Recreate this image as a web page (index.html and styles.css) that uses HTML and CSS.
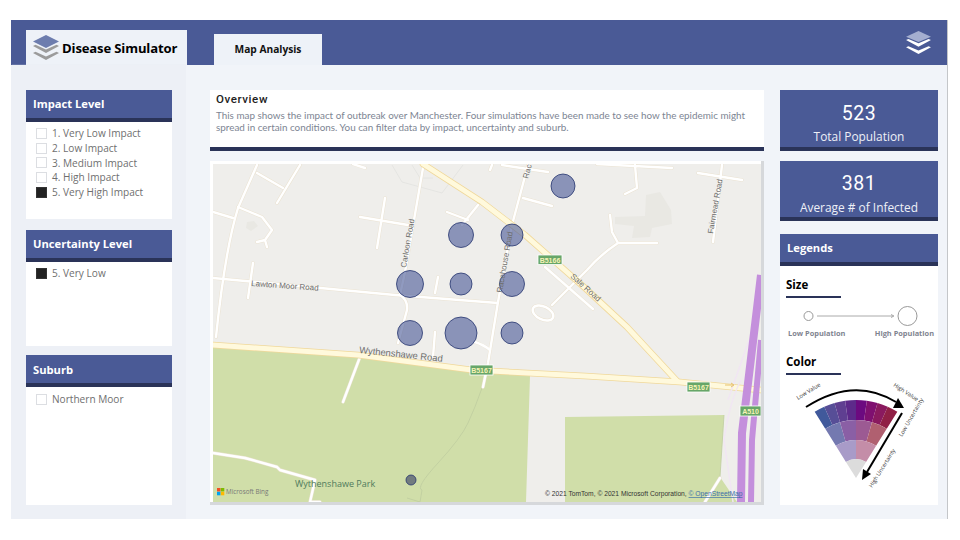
FILE: index.html
```html
<!DOCTYPE html>
<html lang="en">
<head>
    <meta charset="UTF-8">
    <title>Disease Simulator</title>
    <link rel="stylesheet" href="styles.css">
</head>
<body>
    <div class="report">
        <header class="topbar">
            <div class="logo-tab">
                <svg class="logo-icon" viewBox="0 0 26 25">
                    <path class="logo-low" d="M0 11L2.5 9.8L13 14.6L23.5 9.8L26 11L13 18Z"/>
                    <path class="logo-low" d="M0 18L2.5 16.8L13 21.6L23.5 16.8L26 18L13 25Z"/>
                    <path class="logo-top" d="M13 0L26 6.5L13 13L0 6.5Z"/>
                </svg>
                <span>Disease Simulator</span>
            </div>
            <div class="map-tab">Map Analysis</div>
            <svg class="menu-icon" viewBox="0 0 26 24">
                <path class="menu-top" d="M13 0L26 6L13 11.5L0 6Z"/>
                <path class="menu-low" d="M0 9.5L2.5 8.4L13 12.8L23.5 8.4L26 9.5L13 16.5Z"/>
                <path class="menu-low" d="M0 17L2.5 15.9L13 20.3L23.5 15.9L26 17L13 24Z"/>
            </svg>
        </header>

        <div class="content">
            <aside class="sidebar">
                <section class="panel panel-impact">
                    <h2 class="panel-title">Impact Level</h2>
                    <ul class="slicer">
                        <li><i class="check"></i>1. Very Low Impact</li>
                        <li><i class="check"></i>2. Low Impact</li>
                        <li><i class="check"></i>3. Medium Impact</li>
                        <li><i class="check"></i>4. High Impact</li>
                        <li><i class="check on"></i>5. Very High Impact</li>
                    </ul>
                </section>
                <section class="panel panel-uncertainty">
                    <h2 class="panel-title">Uncertainty Level</h2>
                    <ul class="slicer">
                        <li><i class="check on"></i>5. Very Low</li>
                    </ul>
                </section>
                <section class="panel panel-suburb">
                    <h2 class="panel-title">Suburb</h2>
                    <ul class="slicer">
                        <li><i class="check"></i>Northern Moor</li>
                    </ul>
                </section>
            </aside>

            <main class="main">
                <div class="center">
                    <section class="overview">
                        <h1>Overview</h1>
                        <p>This map shows the impact of outbreak over Manchester. Four simulations have been made to see how the epidemic might spread in certain conditions. You can filter data by impact, uncertainty and suburb.</p>
                    </section>
                    <section class="map-card">
                        <svg class="map" viewBox="213 164 548 338">
                            <defs>
                                <g id="minor">
                                    <path d="M257 165L238 208Q225 250 216 337"/>
                                    <path d="M257 173L283 188M300 165L277 203M213 212L233 218"/>
                                    <path d="M238 207L262 217L272 230L265 240L257 242M265 240L267 247"/>
                                    <path d="M213 278L395 295L498 303M253 263L248 298"/>
                                    <path d="M423 168L405 272L400 295Q408 300 407 310L398 343"/>
                                    <path d="M385 198L377 248M360 217L408 225"/>
                                    <path d="M447 212L468 220M478 205L462 225"/>
                                    <path d="M528 165L512 225L498 302L488 363L483 387"/>
                                    <path d="M523 198L552 206M438 277L435 293M435 332L433 357"/>
                                    <path d="M475 342Q484 345 490 350M360 357L343 402"/>
                                    <path d="M213 453L245 458L277 467L280 470L315 480L310 502H320"/>
                                    <path d="M353 164L365 168M492 165L490 170M502 165L548 172"/>
                                    <path d="M597 164L672 168M635 165L637 188L625 194"/>
                                    <path d="M698 173L742 180M722 165L713 242"/>
                                    <path d="M610 215L612 232L618 243H657M618 243Q600 255 587 270L570 287L552 305"/>
                                    <path d="M545 267L593 309M720 478L705 502"/>
                                    <ellipse cx="543" cy="313" rx="11" ry="6.5" transform="rotate(25 543 313)"/>
                                </g>
                                <g id="major">
                                    <path d="M213 345L358 355L472 370L585 376L680 382L761 390"/>
                                    <path d="M423 164L482 202L525 235L585 288L627 327L677 381"/>
                                </g>
                            </defs>
                            <rect class="ground" x="213" y="164" width="548" height="338"/>
                            <path class="park" d="M213 345L358 356L472 371L530 376L526 502H213Z"/>
                            <path class="park" d="M565 417L724 415L720 477L737 502H565Z"/>
                            <path class="building" d="M247 222L254 221L258 226L251 231L246 228Z"/>
                            <path class="building" d="M615 217L645 216L646 195L660 192L671 210L672 224L652 228L650 237L632 238L634 226L615 224Z"/>
                            <path class="outline" d="M392 165L402 182L442 193L463 165M412 165L420 178L433 178"/>
                            <path class="footpath" d="M482 388Q475 408 468 423T438 463T422 490L420 502L407 498"/>
                            <path class="footpath" d="M724 415L720 477"/>

                            <use href="#minor" class="minor-case"/>
                            <use href="#minor" class="minor-fill"/>
                            <use href="#major" class="major-case"/>
                            <use href="#major" class="major-fill"/>

                            <path class="slip" d="M741 380Q730 400 724 440L733 502M749 340Q735 380 728 400"/>
                            <path class="motorway" d="M761 275L749 375L742 433L741 502"/>
                            <path class="motorway thin" d="M761 340L756 395L752 440L751 502"/>
                            <path class="arrow-mark" d="M725 385H733M731 383L734 385L731 387"/>

                            <g class="bubbles">
                                <circle cx="563" cy="186" r="12"/>
                                <circle cx="461" cy="235" r="12.5"/>
                                <circle cx="512" cy="235" r="11"/>
                                <circle cx="410" cy="284" r="13.5"/>
                                <circle cx="461" cy="284" r="11"/>
                                <circle cx="512" cy="284" r="12.5"/>
                                <circle cx="410" cy="333" r="12.5"/>
                                <circle cx="461" cy="333" r="16"/>
                                <circle cx="512" cy="333" r="11"/>
                                <circle class="dark" cx="411" cy="480" r="5"/>
                            </g>

                            <g class="labels">
                                <text transform="translate(251 286) rotate(4)">Lawton Moor Road</text>
                                <text transform="translate(406 268) rotate(-80)">Carloon Road</text>
                                <text transform="translate(502 293) rotate(-80)">Racehouse Road</text>
                                <text transform="translate(528 179) rotate(-75)">Rac</text>
                                <text transform="translate(570 277) rotate(42)">Sale Road</text>
                                <text transform="translate(713 234) rotate(-80)">Fairmead Road</text>
                                <text class="wide" transform="translate(359 353) rotate(6)">Wythenshawe Road</text>
                            </g>
                            <text class="park-label" x="295" y="487">Wythenshawe Park</text>

                            <g class="shield">
                                <rect x="538" y="255" width="24" height="9.5"/><text x="550" y="262.5">B5166</text>
                                <rect x="470" y="365" width="23" height="10"/><text x="481.5" y="373">B5167</text>
                                <rect x="687" y="382" width="23" height="10"/><text x="698.5" y="390">B5167</text>
                                <rect x="740" y="406" width="21" height="10"/><text x="750.5" y="414">A510</text>
                            </g>

                            <rect class="ms-r" x="217" y="488" width="3.5" height="3.5"/>
                            <rect class="ms-g" x="220.8" y="488" width="3.5" height="3.5"/>
                            <rect class="ms-b" x="217" y="491.8" width="3.5" height="3.5"/>
                            <rect class="ms-y" x="220.8" y="491.8" width="3.5" height="3.5"/>
                            <text class="bing" x="226" y="494.3">Microsoft Bing</text>
                            <text class="attribution" x="545" y="496">© 2021 TomTom, © 2021 Microsoft Corporation, <tspan class="osm">© OpenStreetMap</tspan></text>
                        </svg>
                    </section>
                </div>

                <div class="right">
                    <section class="kpi kpi-total">
                        <div class="kpi-value">523</div>
                        <div class="kpi-label">Total Population</div>
                    </section>
                    <section class="kpi kpi-avg">
                        <div class="kpi-value">381</div>
                        <div class="kpi-label">Average # of Infected</div>
                    </section>
                    <section class="panel legends">
                        <h2 class="panel-title">Legends</h2>
                        <h3 class="legend-head">Size</h3>
                        <svg class="size-scale" viewBox="0 0 158 24">
                            <circle cx="28.5" cy="12" r="4.5"/>
                            <circle cx="127.5" cy="12" r="9.5"/>
                            <path d="M37 12H113M111 10.5L114 12L111 13.5"/>
                        </svg>
                        <div class="size-labels">
                            <span>Low Population</span>
                            <span>High Population</span>
                        </div>
                        <h3 class="legend-head legend-color">Color</h3>
                        <svg class="wheel" viewBox="781 380 157 110">
                            <defs>
                                <path id="seg8" d="M-4.05 -57.86L-5.44 -77.81A78 78 0 0 1 5.44 -77.81L4.05 -57.86A58 58 0 0 0 -4.05 -57.86Z"/>
                                <path id="seg4" d="M-5.29 -37.63L-8.07 -57.44A58 58 0 0 1 8.07 -57.44L5.29 -37.63A38 38 0 0 0 -5.29 -37.63Z"/>
                                <path id="seg2" d="M-5.24 -18.26L-10.47 -36.53A38 38 0 0 1 10.47 -36.53L5.24 -18.26A19 19 0 0 0 -5.24 -18.26Z"/>
                            </defs>
                            <g transform="translate(857 478)">
                                <use href="#seg8" transform="rotate(-28)" fill="#40599b"/>
                                <use href="#seg8" transform="rotate(-20)" fill="#574e97"/>
                                <use href="#seg8" transform="rotate(-12)" fill="#5f3f91"/>
                                <use href="#seg8" transform="rotate(-4)" fill="#5d2a8a"/>
                                <use href="#seg8" transform="rotate(4)" fill="#6c0a80"/>
                                <use href="#seg8" transform="rotate(12)" fill="#7f1070"/>
                                <use href="#seg8" transform="rotate(20)" fill="#8a1a5f"/>
                                <use href="#seg8" transform="rotate(28)" fill="#902045"/>
                                <use href="#seg4" transform="rotate(-24)" fill="#7479b0"/>
                                <use href="#seg4" transform="rotate(-8)" fill="#8a5fa5"/>
                                <use href="#seg4" transform="rotate(8)" fill="#9c5a93"/>
                                <use href="#seg4" transform="rotate(24)" fill="#b06070"/>
                                <use href="#seg2" transform="rotate(-16)" fill="#a89bc8"/>
                                <use href="#seg2" transform="rotate(16)" fill="#c48da8"/>
                                <path d="M0 0L-10.07 -16.11A19 19 0 0 1 10.07 -16.11Z" fill="#dcdcdc"/>
                            </g>
                            <path class="wheel-arrow" d="M807 407Q855 376 897 402"/>
                            <path class="wheel-head" d="M905 408L894 408L899 398Z"/>
                            <path class="wheel-arrow" d="M903 413L868 472"/>
                            <path class="wheel-head" d="M863 480L864 469L872 474Z"/>
                            <g class="wheel-text">
                                <text transform="translate(799 400) rotate(-32)">Low Value</text>
                                <text transform="translate(894 386) rotate(33)">High Value</text>
                                <text transform="translate(903 437) rotate(-60)">Low Uncertainty</text>
                                <text transform="translate(873 488) rotate(-58)">High Uncertainty</text>
                            </g>
                        </svg>
                    </section>
                </div>
            </main>
        </div>
    </div>
</body>
</html>
```

FILE: styles.css
```css
body {
    margin: 0;
    background: #fff;
    font-family: "Open Sans", "Liberation Sans", sans-serif;
}
h1, h2, h3, p, ul {
    margin: 0;
    padding: 0;
}
svg {
    display: block;
}

.report {
    width: 936px;
    height: 499px;
    margin: 20px 0 0 11px;
    display: flex;
    flex-direction: column;
    box-shadow: 1px 0 0 #c4c6c9;
}

/* top bar */
.topbar {
    height: 45px;
    flex: none;
    display: flex;
    align-items: flex-end;
    background: #4a5a96;
}
.logo-tab {
    width: 161px;
    height: 35px;
    margin-left: 15px;
    padding-left: 7px;
    box-sizing: border-box;
    display: flex;
    align-items: center;
    gap: 3px;
    background: #eef2f8;
    color: #000;
    font-size: 13.1px;
    font-weight: 700;
    letter-spacing: -0.15px;
    white-space: nowrap;
}
.logo-icon {
    width: 26px;
    height: 25px;
    flex: none;
}
.logo-top {
    fill: #6d7dae;
}
.logo-low {
    fill: #9b9b9b;
}
.map-tab {
    width: 108px;
    height: 31px;
    margin-left: 27px;
    padding-bottom: 2px;
    box-sizing: border-box;
    display: flex;
    align-items: center;
    justify-content: center;
    background: #eef2f8;
    color: #111;
    font-size: 10.2px;
    font-weight: 700;
}
.menu-icon {
    width: 25px;
    height: 23px;
    margin: 0 16px 11px auto;
}
.menu-top {
    fill: #a4aed0;
}
.menu-low {
    fill: #fff;
}

/* page body */
.content {
    flex: 1;
    display: flex;
    min-height: 0;
}
.sidebar {
    width: 175px;
    flex: none;
    box-sizing: border-box;
    padding: 25px 14px 0 15px;
    background: #edf0f6;
    box-shadow: 1px 0 1px #e2e5eb;
}
.panel {
    background: #fff;
}
.panel-title {
    height: 32px;
    box-sizing: border-box;
    padding: 5px 0 0 7px;
    border-bottom: 4px solid #2a3358;
    background: #4a5a96;
    color: #fff;
    font-size: 11.2px;
    font-weight: 700;
    line-height: 17px;
}
.panel-impact {
    height: 129px;
}
.panel-uncertainty {
    height: 116px;
    margin-top: 11px;
}
.panel-suburb {
    height: 150px;
    margin-top: 9px;
}
.panel-suburb .panel-title {
    padding-top: 6px;
}
.slicer {
    list-style: none;
    padding: 4px 0 0 10px;
    color: #6f6f6f;
    font-size: 10.1px;
}
.panel-suburb .slicer {
    padding-top: 5px;
}
.slicer li {
    height: 14.7px;
    display: flex;
    align-items: center;
    gap: 5px;
}
.check {
    width: 9px;
    height: 9px;
    border: 1px solid #dcdee2;
    background: #fff;
}
.check.on {
    border-color: #333;
    background: #222;
}

.main {
    flex: 1;
    display: flex;
    gap: 16px;
    padding: 25px 9px 0 24px;
    background: #f1f4f9;
}
.center {
    width: 554px;
    flex: none;
}
.overview {
    height: 61px;
    box-sizing: border-box;
    padding: 2px 8px 0 6px;
    border-bottom: 4px solid #2a3358;
    background: #fff;
}
.overview h1 {
    color: #222;
    font-family: Roboto, "Liberation Sans", sans-serif;
    font-size: 11.5px;
    font-weight: 500;
    letter-spacing: 0.6px;
    line-height: 15px;
}
.overview p {
    margin-top: 2px;
    color: #7d8593;
    font-family: Lato, "Open Sans", sans-serif;
    font-size: 9.87px;
    line-height: 12px;
}

/* map */
.map-card {
    height: 344px;
    margin-top: 10px;
    box-sizing: border-box;
    padding: 3px 0 0 3px;
    border-right: 3px solid #d6d8db;
    border-bottom: 3px solid #d6d8db;
    background: #fff;
}
.map {
    width: 548px;
    height: 338px;
}
.ground {
    fill: #efeeeb;
}
.park {
    fill: #d0dea9;
}
.building {
    fill: #e9e8e3;
}
.outline {
    fill: none;
    stroke: #e2e2df;
    stroke-width: 0.8;
}
.footpath {
    fill: none;
    stroke: #bfcd9f;
    stroke-width: 0.8;
}
.minor-case,
.minor-fill,
.major-case,
.major-fill {
    fill: none;
    stroke-linecap: round;
    stroke-linejoin: round;
}
.minor-case {
    stroke: #ebe3d3;
    stroke-width: 3.4;
}
.minor-fill {
    stroke: #fff;
    stroke-width: 2.4;
}
.major-case {
    stroke: #f0d89a;
    stroke-width: 6.5;
}
.major-fill {
    stroke: #fff9dc;
    stroke-width: 5;
}
.slip {
    fill: none;
    stroke: #f1e6f3;
    stroke-width: 1.5;
}
.motorway {
    fill: none;
    stroke: #c48fdc;
    stroke-width: 8;
}
.motorway.thin {
    stroke-width: 6;
}
.arrow-mark {
    fill: none;
    stroke: #e8c36d;
    stroke-width: 1;
}
.bubbles circle {
    fill: rgba(70, 86, 150, 0.6);
    stroke: #26356f;
    stroke-width: 0.8;
}
.bubbles .dark {
    fill: rgba(50, 56, 100, 0.6);
}
.labels text {
    fill: #6e6e6e;
    font-family: "Liberation Sans", sans-serif;
    font-size: 8px;
}
.labels .wide {
    font-size: 9.4px;
}
.park-label {
    fill: #4f7a5c;
    font-size: 9px;
}
.shield rect {
    fill: #67a668;
    stroke: #fff;
    stroke-width: 0.8;
}
.shield text {
    fill: #f6f3b6;
    font-family: "Liberation Sans", sans-serif;
    font-size: 7px;
    font-weight: 700;
    text-anchor: middle;
}
.ms-r { fill: #f25022; }
.ms-g { fill: #7fba00; }
.ms-b { fill: #00a4ef; }
.ms-y { fill: #ffb900; }
.bing {
    fill: #777;
    font-size: 6.3px;
}
.attribution {
    fill: #333;
    font-family: "Liberation Sans", sans-serif;
    font-size: 6.7px;
}
.osm {
    fill: #3a6ea8;
    text-decoration: underline;
}

/* right column */
.right {
    width: 158px;
    flex: none;
}
.kpi {
    box-sizing: border-box;
    border-bottom: 4px solid #2a3358;
    background: #4a5a96;
    color: #fff;
    text-align: center;
}
.kpi-total {
    height: 61px;
}
.kpi-avg {
    height: 60px;
    margin-top: 10px;
}
.kpi-value {
    padding-top: 11px;
    font-family: Roboto, "Liberation Sans", sans-serif;
    font-size: 19.5px;
    line-height: 26px;
    letter-spacing: 0.6px;
}
.kpi-label {
    margin-top: 1px;
    color: #eef0f7;
    font-size: 11.9px;
    line-height: 16px;
}
.kpi-avg .kpi-value {
    padding-top: 10px;
}
.kpi-avg .kpi-label {
    margin-top: 2px;
}
.legends {
    height: 271px;
    margin-top: 13px;
}
.legend-head {
    width: 55px;
    height: 20px;
    margin: 10px 0 0 6px;
    border-bottom: 2px solid #2a3358;
    color: #000;
    font-size: 11.5px;
    font-weight: 700;
    line-height: 18px;
}
.size-scale {
    width: 158px;
    height: 24px;
    margin-top: 6px;
}
.size-scale circle {
    fill: #fff;
    stroke: #999;
}
.size-scale path {
    fill: none;
    stroke: #aaa;
}
.size-labels {
    display: flex;
    justify-content: space-between;
    padding: 0 4px 0 8px;
    color: #7f8490;
    font-size: 7.4px;
    font-weight: 700;
    line-height: 11px;
}
.legend-color {
    margin-top: 14px;
}
.wheel {
    width: 157px;
    height: 110px;
    margin-top: 5px;
}
.wheel-arrow {
    fill: none;
    stroke: #000;
    stroke-width: 2;
}
.wheel-head {
    fill: #000;
}
.wheel-text text {
    fill: #333;
    font-size: 5.7px;
}
```
